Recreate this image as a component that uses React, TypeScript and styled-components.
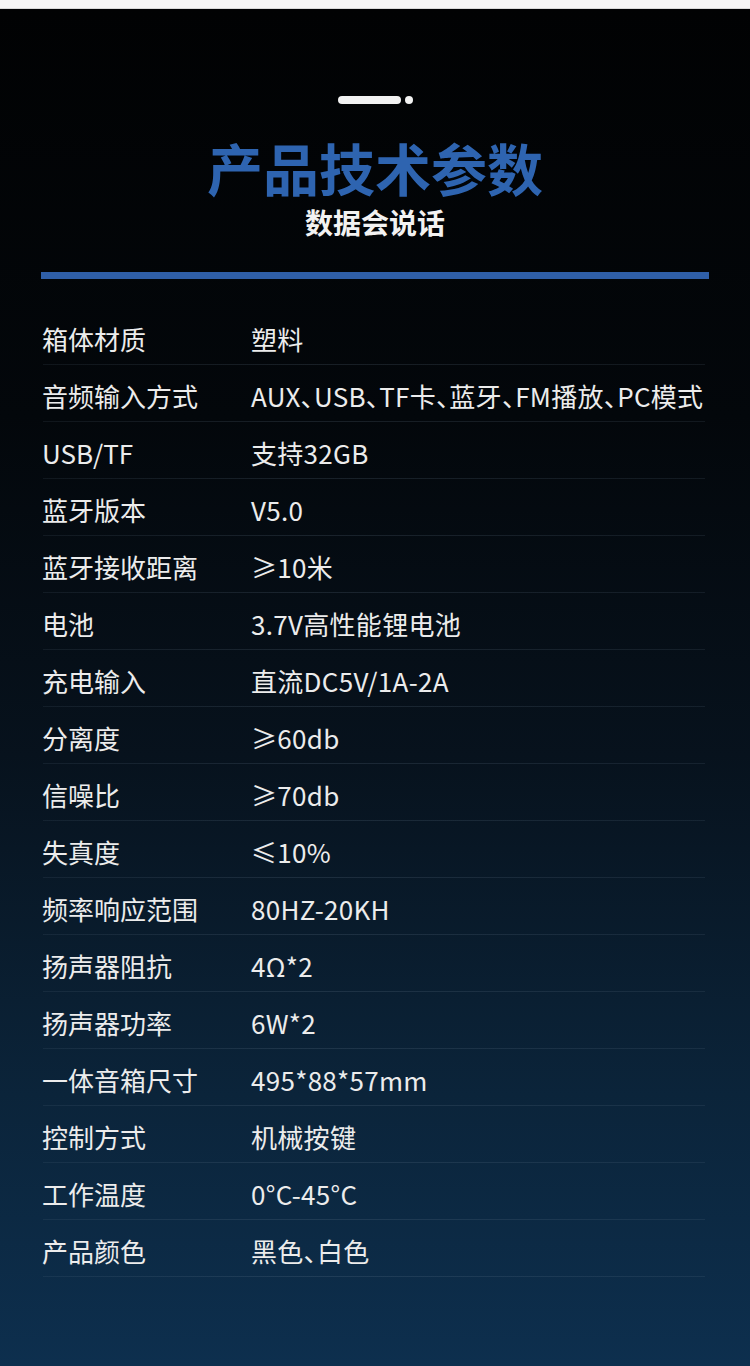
import React from 'react'
import styled, { createGlobalStyle } from 'styled-components'

const GlobalStyle = createGlobalStyle`
  html, body {
    margin: 0;
    padding: 0;
    background: #020304;
  }
  body {
    font-family: "Noto Sans CJK SC", "Noto Sans", sans-serif;
  }
`

const TopStrip = styled.div`
  height: 8px;
  background: #f5f5f5;
  border-bottom: 1px solid #d8d8d8;
`

const Page = styled.div`
  min-height: 1357px;
  background: linear-gradient(180deg, #010203 0%, #03070b 30%, #07121d 55%, #0b243a 80%, #0d2f4e 100%);
  padding-top: 87px;
  box-sizing: border-box;
`

const Deco = styled.div`
  display: flex;
  justify-content: center;
  align-items: center;
  gap: 4px;
`

const Pill = styled.span`
  width: 63px;
  height: 8px;
  border-radius: 4px;
  background: #f2f2f2;
`

const Dot = styled.span`
  width: 8px;
  height: 8px;
  border-radius: 50%;
  background: #f2f2f2;
`

const Title = styled.h1`
  margin: 31px 0 0;
  text-align: center;
  font-size: 56px;
  line-height: 64px;
  font-weight: 700;
  color: #2e64b0;
`

const Subtitle = styled.h2`
  margin: 3px 0 0;
  text-align: center;
  font-size: 28px;
  line-height: 40px;
  font-weight: 700;
  color: #f2f2f2;
`

const Bar = styled.div`
  margin: 30px 41px 0;
  height: 7px;
  background: #2f5fa8;
`

const Table = styled.div`
  margin: 29px 45px 0 42px;
`

const Row = styled.div`
  display: grid;
  grid-template-columns: 209px 1fr;
  align-items: center;
  height: 57px;
  padding-top: 3px;
  box-sizing: border-box;
  position: relative;
  color: #ececec;
  font-size: 26px;
  white-space: nowrap;
  font-feature-settings: "halt" 1;
  &::after {
    content: '';
    position: absolute;
    left: 1px;
    right: 0;
    bottom: 0;
    height: 1px;
    background: linear-gradient(90deg, rgba(110, 130, 150, 0.12), rgba(110, 130, 150, 0.2) 40%, rgba(110, 130, 150, 0.14));
  }
`

const Label = styled.span``

const Value = styled.span`
  letter-spacing: 0.3px;
`

const specs: [string, string][] = [
  ['箱体材质', '塑料'],
  ['音频输入方式', 'AUX、USB、TF卡、蓝牙、FM播放、PC模式'],
  ['USB/TF', '支持32GB'],
  ['蓝牙版本', 'V5.0'],
  ['蓝牙接收距离', '≥10米'],
  ['电池', '3.7V高性能锂电池'],
  ['充电输入', '直流DC5V/1A-2A'],
  ['分离度', '≥60db'],
  ['信噪比', '≥70db'],
  ['失真度', '≤10%'],
  ['频率响应范围', '80HZ-20KH'],
  ['扬声器阻抗', '4Ω*2'],
  ['扬声器功率', '6W*2'],
  ['一体音箱尺寸', '495*88*57mm'],
  ['控制方式', '机械按键'],
  ['工作温度', '0°C-45°C'],
  ['产品颜色', '黑色、白色'],
]

export default function App() {
  return (
    <>
      <GlobalStyle />
      <TopStrip />
      <Page>
        <Deco>
          <Pill />
          <Dot />
        </Deco>
        <Title>产品技术参数</Title>
        <Subtitle>数据会说话</Subtitle>
        <Bar />
        <Table>
          {specs.map(([k, v]) => (
            <Row key={k}>
              <Label>{k}</Label>
              <Value>{v}</Value>
            </Row>
          ))}
        </Table>
      </Page>
    </>
  )
}
